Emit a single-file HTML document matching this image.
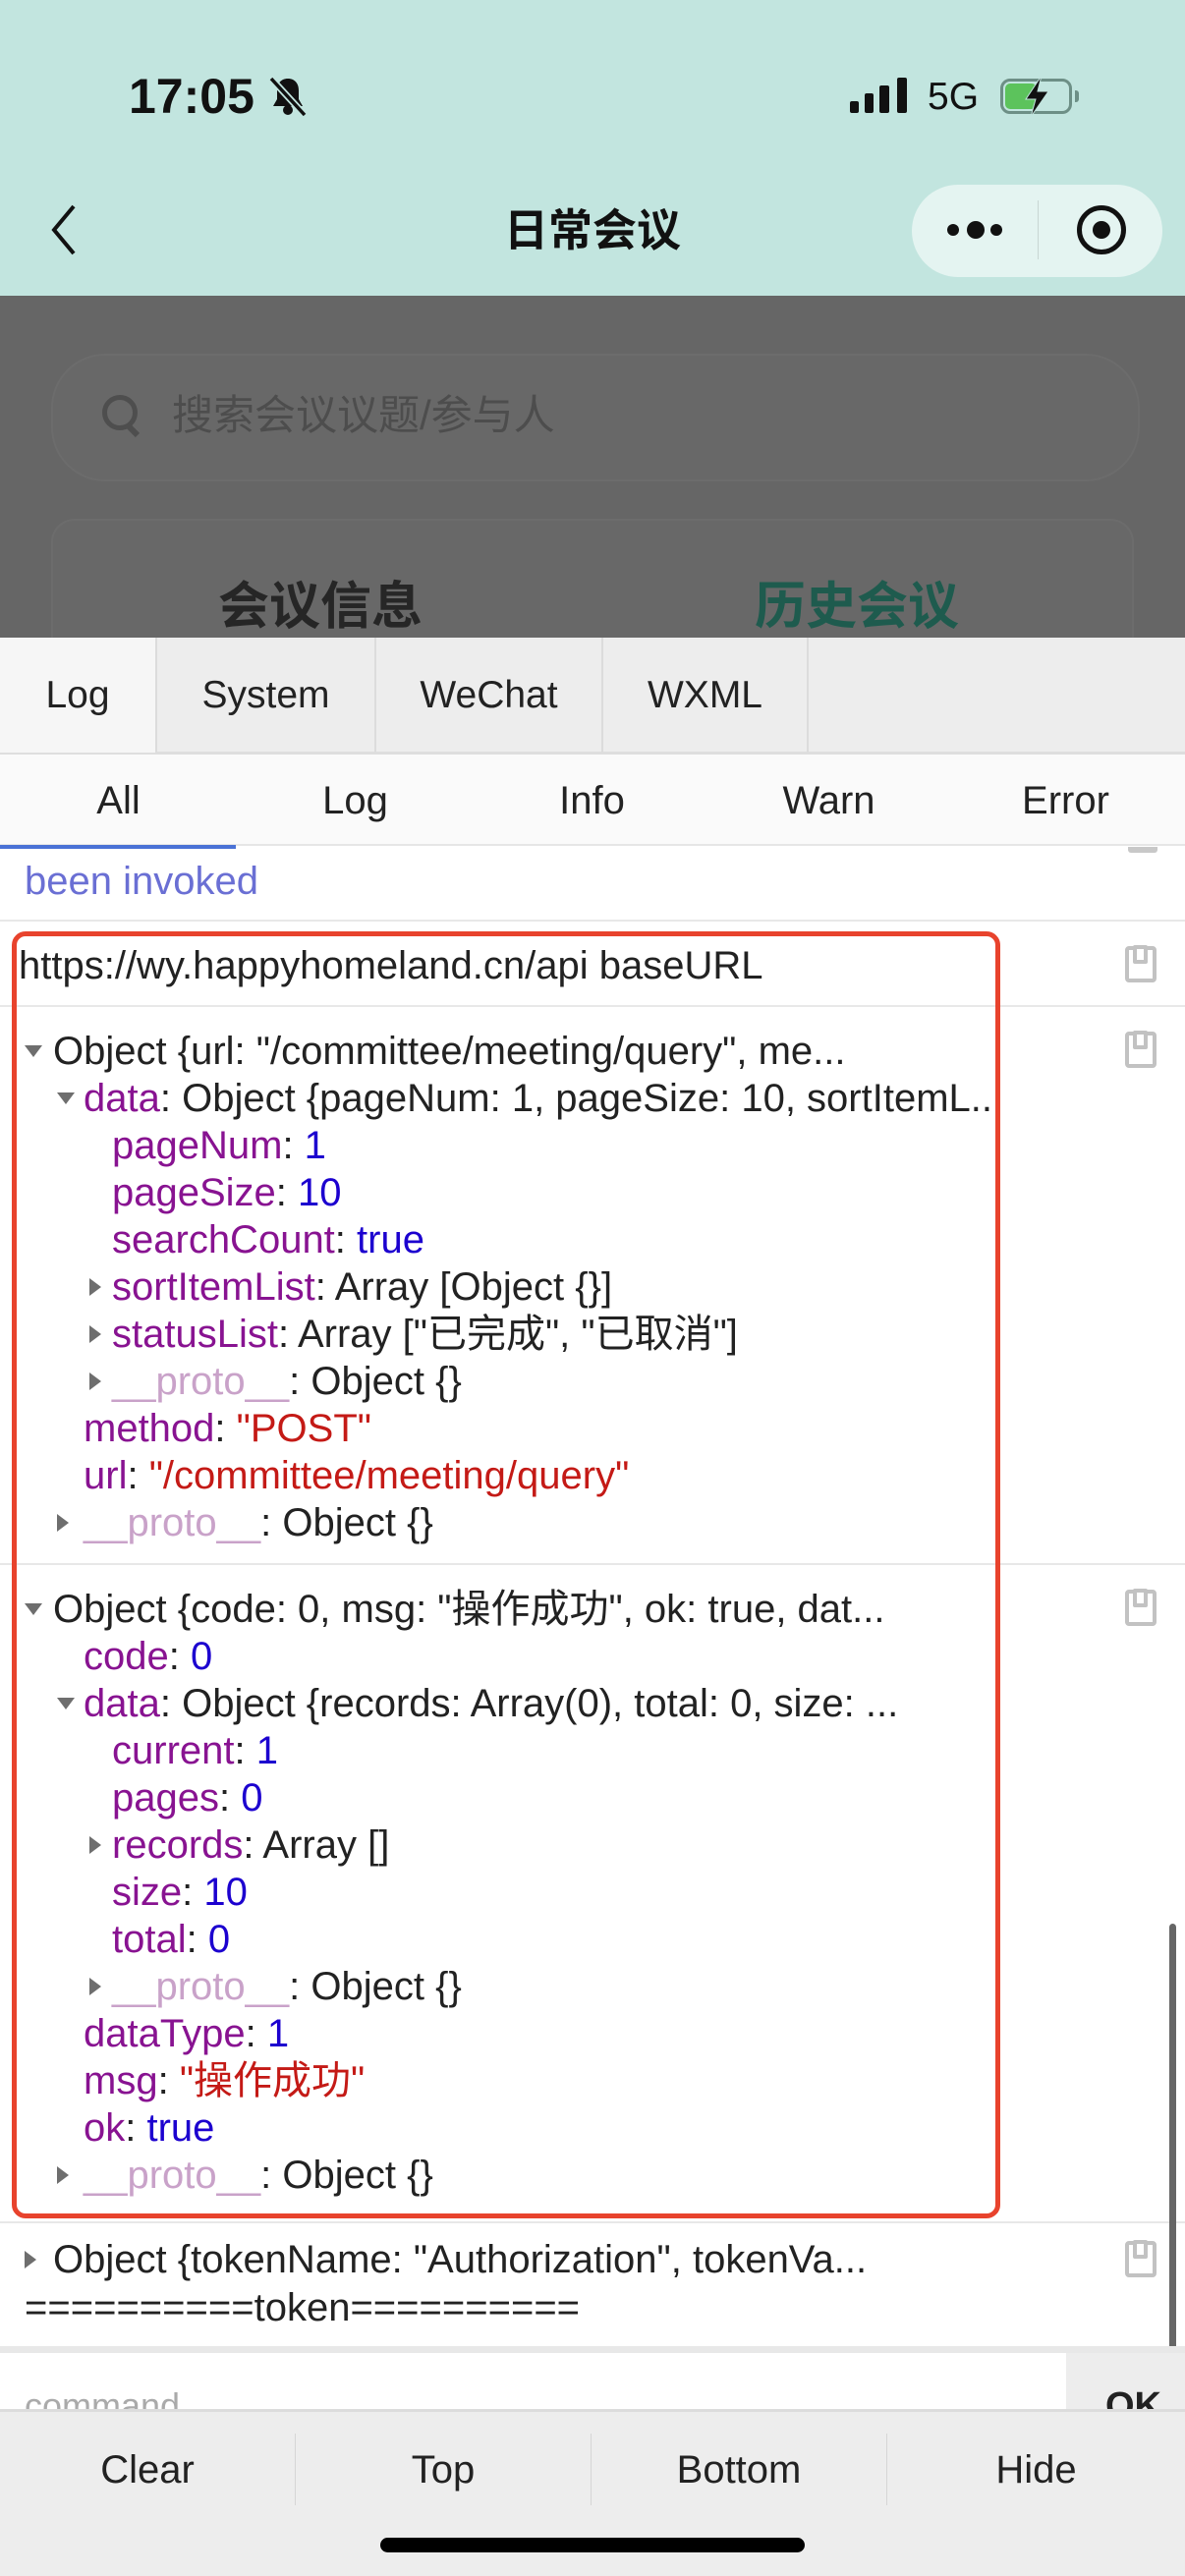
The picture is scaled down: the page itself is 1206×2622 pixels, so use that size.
<!DOCTYPE html>
<html><head><meta charset="utf-8">
<style>
*{margin:0;padding:0;box-sizing:border-box}
body{width:1206px;height:2622px;position:relative;overflow:hidden;background:#fff;font-family:"Liberation Sans","Noto Sans CJK SC",sans-serif;color:#222}
.a{position:absolute}
.ln{position:absolute;height:48px;line-height:48px;font-size:40px;white-space:nowrap;color:#222}
.k{color:#881391}.n{color:#1c00cf}.s{color:#c41a16}.p{color:#c9a2c9}
.tr{position:absolute;width:0;height:0}
.tr.r{border-top:9px solid transparent;border-bottom:9px solid transparent;border-left:12px solid #6e6e6e;top:15px}
.tr.d{border-left:9px solid transparent;border-right:9px solid transparent;border-top:12px solid #6e6e6e;top:18px}
.sep{position:absolute;left:0;width:1206px;height:2px;background:#e8e8e8}
.clip{position:absolute;left:1145px;width:32px;height:37px;border:4px solid #c2c2c2;border-radius:4px}
.clip:after{content:"";position:absolute;left:4px;top:-5px;width:7px;height:11px;border:4px solid #c2c2c2;background:#fff;border-radius:2px}
</style></head><body>
<!-- header -->
<div class="a" style="left:0;top:0;width:1206px;height:301px;background:#c2e5df"></div>
<div class="a" style="left:131px;top:68px;font-size:50px;font-weight:bold;line-height:60px;color:#111">17:05</div>
<svg class="a" style="left:272px;top:77px" width="42" height="42" viewBox="0 0 42 42"><path d="M21 3c-7 0-11 5-11 12v9l-4 7h30l-4-7v-9c0-7-4-12-11-12z" fill="#111"/><circle cx="21" cy="35" r="5" fill="#111"/><path d="M4 3L38 40" stroke="#c2e5df" stroke-width="7"/><path d="M4 3L38 40" stroke="#111" stroke-width="3.5"/></svg>
<div class="a" style="left:865px;top:103px;width:9px;height:12px;background:#111;border-radius:2px"></div>
<div class="a" style="left:880px;top:95px;width:9px;height:20px;background:#111;border-radius:2px"></div>
<div class="a" style="left:895px;top:87px;width:10px;height:28px;background:#111;border-radius:2px"></div>
<div class="a" style="left:913px;top:79px;width:10px;height:36px;background:#111;border-radius:2px"></div>
<div class="a" style="left:944px;top:77px;font-size:39px;line-height:44px;color:#111">5G</div>
<div class="a" style="left:1018px;top:80px;width:73px;height:36px;border:3px solid #6d8f86;border-radius:10px"></div>
<div class="a" style="left:1023px;top:85px;width:32px;height:26px;background:#5cc35c;border-radius:5px"></div>
<div class="a" style="left:1094px;top:92px;width:4px;height:12px;background:#6d8f86;border-radius:0 3px 3px 0"></div>
<svg class="a" style="left:1040px;top:76px" width="30" height="44" viewBox="0 0 30 44"><path d="M20 1L4 25h10l-5 18L27 17H16z" fill="#111" stroke="#c2e5df" stroke-width="1"/></svg>
<svg class="a" style="left:48px;top:206px" width="34" height="56" viewBox="0 0 34 56"><path d="M27 4L7 28l20 24" fill="none" stroke="#111" stroke-width="4"/></svg>
<div class="a" style="left:0;top:205px;width:1206px;text-align:center;font-size:45px;line-height:60px;color:#111;font-weight:bold">日常会议</div>
<div class="a" style="left:928px;top:188px;width:255px;height:94px;border-radius:47px;background:#e4f4f1"></div>
<div class="a" style="left:964px;top:228px;width:12px;height:12px;border-radius:50%;background:#111"></div>
<div class="a" style="left:984px;top:225px;width:18px;height:18px;border-radius:50%;background:#111"></div>
<div class="a" style="left:1008px;top:228px;width:12px;height:12px;border-radius:50%;background:#111"></div>
<div class="a" style="left:1056px;top:204px;width:1px;height:60px;background:#c8d6d3"></div>
<div class="a" style="left:1096px;top:209px;width:50px;height:50px;border-radius:50%;border:5px solid #111"></div>
<div class="a" style="left:1112px;top:225px;width:18px;height:18px;border-radius:50%;background:#111"></div>
<!-- overlay -->
<div class="a" style="left:0;top:301px;width:1206px;height:348px;background:#666"></div>
<div class="a" style="left:52px;top:360px;width:1108px;height:130px;border-radius:55px;background:#686868;border:2px solid #6c6c6c"></div>
<div class="a" style="left:104px;top:402px;width:36px;height:36px;border-radius:50%;border:5px solid #4e4e4e"></div>
<div class="a" style="left:132px;top:431px;width:6px;height:14px;background:#4e4e4e;transform:rotate(-45deg)"></div>
<div class="a" style="left:175px;top:398px;font-size:42px;line-height:50px;color:#4d4d4d">搜索会议议题/参与人</div>
<div class="a" style="left:52px;top:528px;width:1102px;height:200px;border-radius:24px;background:#686868;border:2px solid #6c6c6c"></div>
<div class="a" style="left:222px;top:588px;font-size:52px;line-height:60px;font-weight:bold;color:#262626">会议信息</div>
<div class="a" style="left:768px;top:588px;font-size:52px;line-height:60px;font-weight:bold;color:#1e5b4e">历史会议</div>
<!-- tabs -->
<div class="a" style="left:0;top:649px;width:1206px;height:119px;background:#ededed;border-bottom:3px solid #dedede"></div>
<div class="a" style="left:0;top:649px;width:158px;height:117px;background:#f6f6f6"></div>
<div class="a" style="left:158px;top:649px;width:2px;height:117px;background:#dcdcdc"></div>
<div class="a" style="left:381px;top:649px;width:2px;height:117px;background:#dcdcdc"></div>
<div class="a" style="left:612px;top:649px;width:2px;height:117px;background:#dcdcdc"></div>
<div class="a" style="left:821px;top:649px;width:2px;height:117px;background:#dcdcdc"></div>
<div class="a" style="left:0;top:684px;width:158px;text-align:center;font-size:39px;line-height:48px">Log</div>
<div class="a" style="left:160px;top:684px;width:221px;text-align:center;font-size:39px;line-height:48px">System</div>
<div class="a" style="left:383px;top:684px;width:229px;text-align:center;font-size:39px;line-height:48px">WeChat</div>
<div class="a" style="left:614px;top:684px;width:207px;text-align:center;font-size:39px;line-height:48px">WXML</div>
<!-- content -->
<div class="ln" style="left:25px;top:873px;color:#6a6fd4">been invoked</div>
<div class="a" style="left:0;top:768px;width:1206px;height:93px;background:#fafafa;border-bottom:2px solid #e6e6e6"></div>
<div class="a" style="left:0;top:860px;width:240px;height:4px;background:#4a72d6"></div>
<div class="ln" style="left:0;top:791px;width:241px;text-align:center">All</div>
<div class="ln" style="left:241px;top:791px;width:241px;text-align:center">Log</div>
<div class="ln" style="left:482px;top:791px;width:241px;text-align:center">Info</div>
<div class="ln" style="left:723px;top:791px;width:241px;text-align:center">Warn</div>
<div class="ln" style="left:964px;top:791px;width:241px;text-align:center">Error</div>
<div class="a" style="left:1148px;top:862px;width:30px;height:6px;background:#c8c8c8;border-radius:0 0 3px 3px"></div>

<div class="sep" style="top:936px"></div>
<div class="sep" style="top:1023px"></div>
<div class="sep" style="top:1591px"></div>
<div class="sep" style="top:2261px"></div>
<div class="clip" style="top:963px"></div>
<div class="clip" style="top:1050px"></div>
<div class="clip" style="top:1618px"></div>
<div class="clip" style="top:2281px"></div>

<div class="ln" style="left:19px;top:959px">https://wy.happyhomeland.cn/api baseURL</div>

<div class="ln" style="left:25px;top:1046px;width:1px"><i class="tr d" style="left:0"></i></div>
<div class="ln" style="left:54px;top:1046px">Object {url: "/committee/meeting/query", me...</div>
<div class="ln" style="left:58px;top:1094px;width:1px"><i class="tr d" style="left:0"></i></div>
<div class="ln" style="left:85px;top:1094px"><span class="k">data</span>: Object {pageNum: 1, pageSize: 10, sortItemL...</div>
<div class="ln" style="left:114px;top:1142px"><span class="k">pageNum</span>: <span class="n">1</span></div>
<div class="ln" style="left:114px;top:1190px"><span class="k">pageSize</span>: <span class="n">10</span></div>
<div class="ln" style="left:114px;top:1238px"><span class="k">searchCount</span>: <span class="n">true</span></div>
<div class="ln" style="left:91px;top:1286px;width:1px"><i class="tr r" style="left:0"></i></div>
<div class="ln" style="left:114px;top:1286px"><span class="k">sortItemList</span>: Array [Object {}]</div>
<div class="ln" style="left:91px;top:1334px;width:1px"><i class="tr r" style="left:0"></i></div>
<div class="ln" style="left:114px;top:1334px"><span class="k">statusList</span>: Array ["已完成", "已取消"]</div>
<div class="ln" style="left:91px;top:1382px;width:1px"><i class="tr r" style="left:0"></i></div>
<div class="ln" style="left:114px;top:1382px"><span class="p">__proto__</span>: Object {}</div>
<div class="ln" style="left:85px;top:1430px"><span class="k">method</span>: <span class="s">"POST"</span></div>
<div class="ln" style="left:85px;top:1478px"><span class="k">url</span>: <span class="s">"/committee/meeting/query"</span></div>
<div class="ln" style="left:58px;top:1526px;width:1px"><i class="tr r" style="left:0"></i></div>
<div class="ln" style="left:85px;top:1526px"><span class="p">__proto__</span>: Object {}</div>

<div class="ln" style="left:25px;top:1614px;width:1px"><i class="tr d" style="left:0"></i></div>
<div class="ln" style="left:54px;top:1614px">Object {code: 0, msg: "操作成功", ok: true, dat...</div>
<div class="ln" style="left:85px;top:1662px"><span class="k">code</span>: <span class="n">0</span></div>
<div class="ln" style="left:58px;top:1710px;width:1px"><i class="tr d" style="left:0"></i></div>
<div class="ln" style="left:85px;top:1710px"><span class="k">data</span>: Object {records: Array(0), total: 0, size: ...</div>
<div class="ln" style="left:114px;top:1758px"><span class="k">current</span>: <span class="n">1</span></div>
<div class="ln" style="left:114px;top:1806px"><span class="k">pages</span>: <span class="n">0</span></div>
<div class="ln" style="left:91px;top:1854px;width:1px"><i class="tr r" style="left:0"></i></div>
<div class="ln" style="left:114px;top:1854px"><span class="k">records</span>: Array []</div>
<div class="ln" style="left:114px;top:1902px"><span class="k">size</span>: <span class="n">10</span></div>
<div class="ln" style="left:114px;top:1950px"><span class="k">total</span>: <span class="n">0</span></div>
<div class="ln" style="left:91px;top:1998px;width:1px"><i class="tr r" style="left:0"></i></div>
<div class="ln" style="left:114px;top:1998px"><span class="p">__proto__</span>: Object {}</div>
<div class="ln" style="left:85px;top:2046px"><span class="k">dataType</span>: <span class="n">1</span></div>
<div class="ln" style="left:85px;top:2094px"><span class="k">msg</span>: <span class="s">"操作成功"</span></div>
<div class="ln" style="left:85px;top:2142px"><span class="k">ok</span>: <span class="n">true</span></div>
<div class="ln" style="left:58px;top:2190px;width:1px"><i class="tr r" style="left:0"></i></div>
<div class="ln" style="left:85px;top:2190px"><span class="p">__proto__</span>: Object {}</div>

<div class="ln" style="left:25px;top:2276px;width:1px"><i class="tr r" style="left:0"></i></div>
<div class="ln" style="left:54px;top:2276px">Object {tokenName: "Authorization", tokenVa...</div>
<div class="ln" style="left:25px;top:2325px">==========token==========</div>

<div class="a" style="left:12px;top:948px;width:1006px;height:1310px;border:5px solid #e8432d;border-radius:14px"></div>
<div class="a" style="left:1190px;top:1958px;width:7px;height:434px;background:#666;border-radius:4px"></div>

<!-- command -->
<div class="a" style="left:0;top:2388px;width:1206px;height:7px;background:#e8e8e8"></div>
<div class="a" style="left:1085px;top:2395px;width:121px;height:60px;background:#ededed;overflow:hidden"><div style="position:absolute;left:40px;top:30px;font-size:38px;font-weight:bold;line-height:48px">OK</div></div>
<div class="a" style="left:0;top:2395px;width:1085px;height:60px;overflow:hidden"><div style="position:absolute;left:25px;top:30px;font-size:36px;color:#aaa;line-height:48px">command</div></div>
<!-- bottom bar -->
<div class="a" style="left:0;top:2452px;width:1206px;height:170px;background:#ededed;border-top:3px solid #dcdcdc"></div>
<div class="a" style="left:300px;top:2477px;width:1px;height:73px;background:#d6d6d6"></div>
<div class="a" style="left:601px;top:2477px;width:1px;height:73px;background:#d6d6d6"></div>
<div class="a" style="left:902px;top:2477px;width:1px;height:73px;background:#d6d6d6"></div>
<div class="ln" style="left:0;top:2490px;width:300px;text-align:center">Clear</div>
<div class="ln" style="left:301px;top:2490px;width:300px;text-align:center">Top</div>
<div class="ln" style="left:602px;top:2490px;width:300px;text-align:center">Bottom</div>
<div class="ln" style="left:903px;top:2490px;width:303px;text-align:center">Hide</div>
<div class="a" style="left:387px;top:2583px;width:432px;height:15px;background:#000;border-radius:8px"></div>
</body></html>
